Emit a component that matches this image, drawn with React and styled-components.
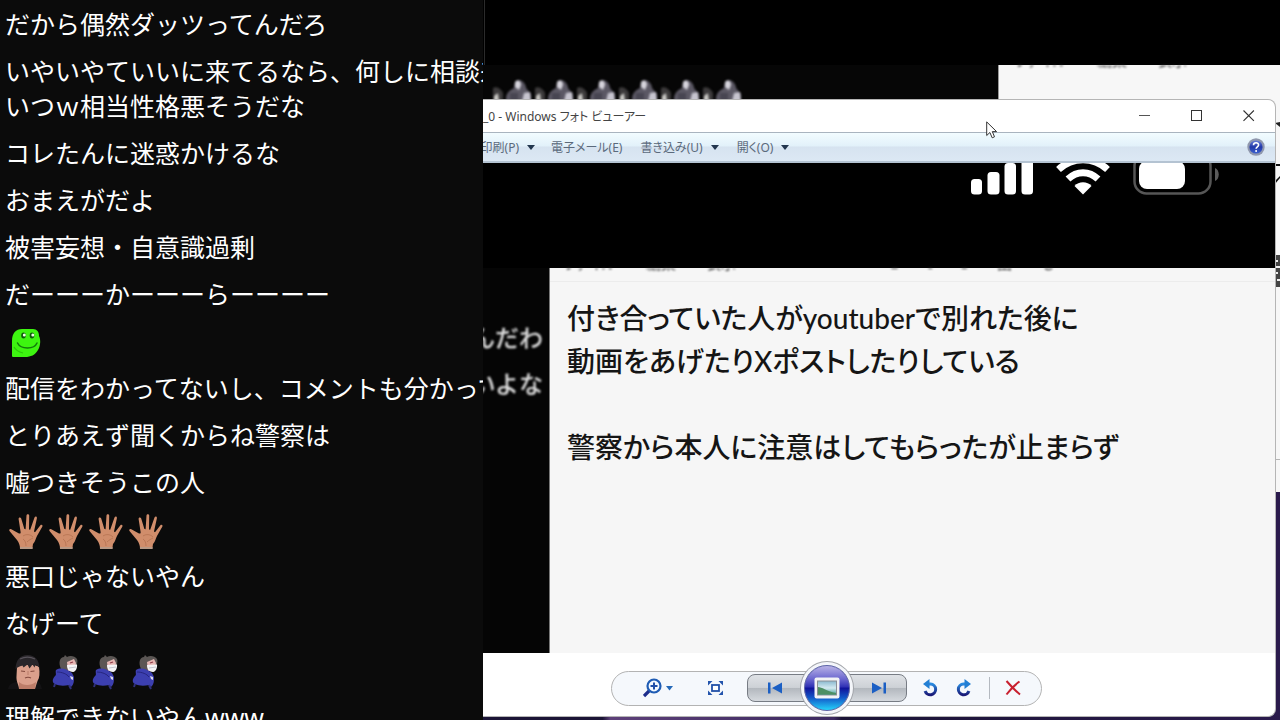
import styled, { createGlobalStyle } from "styled-components";

const GlobalStyle = createGlobalStyle`
  * {
    box-sizing: border-box;
  }

  body {
    margin: 0;
    background: #000;
    font-family: "Noto Sans", "Noto Sans CJK JP", sans-serif;
    overflow: hidden;
  }

  button {
    font-family: inherit;
  }
`;

const messages = [
  { lines: ["だから偶然ダッツってんだろ"] },
  {
    lines: [
      "いやいやていいに来てるなら、何しに相談来",
      "いつｗ相当性格悪そうだな",
    ],
  },
  { lines: ["コレたんに迷惑かけるな"] },
  { lines: ["おまえがだよ"] },
  { lines: ["被害妄想・自意識過剰"] },
  { lines: ["だーーーかーーーらーーーー"] },
  { emotes: ["frog"] },
  { lines: ["配信をわかってないし、コメントも分かって"] },
  { lines: ["とりあえず聞くからね警察は"] },
  { lines: ["嘘つきそうこの人"] },
  { emotes: ["hand", "hand", "hand", "hand"] },
  { lines: ["悪口じゃないやん"] },
  { lines: ["なげーて"] },
  { emotes: ["cap", "mask", "mask", "mask"] },
  { lines: ["理解できないやんwww"] },
];

const Frog = () => (
  <EmoteSvg viewBox="0 0 36 36" role="img" aria-label="frog">
    <path
      d="M4 31V16C4 8 8 4 14 4h11c4 0 6 3 6 7 2 4 1.500 10-1 14-3 5-7 7-13 7H6c-1.500 0-2-.4-2-1z"
      fill="#3df510"
    />
    <ellipse cx="15.500" cy="10.500" rx="2.300" ry="3" fill="#0d5a0a" />
    <ellipse cx="24" cy="10.500" rx="2.300" ry="3" fill="#0d5a0a" />
    <circle cx="16.300" cy="10" r="1.500" fill="#e8ffe0" />
    <circle cx="24.800" cy="10" r="1.500" fill="#e8ffe0" />
    <path
      d="M9.500 18c2 4 6 5 10 5s8-1.500 9.500-5"
      stroke="#127a0c"
      strokeWidth="1.500"
      fill="none"
      strokeLinecap="round"
    />
    <path d="M6 22c2 4 5 5 9 6" stroke="#2cc70a" strokeWidth="1.200" fill="none" />
  </EmoteSvg>
);

const Hand = () => (
  <EmoteSvg viewBox="0 0 36 36" role="img" aria-label="hand">
    <path
      d="M12 36c0-4-1-6-3-9L1.500 18c-.8-1.300.4-2.400 1.800-1.700L11 20.500c1.300.3 1.800-.2 1.600-1.500L10.600 6c0-1.700 2-2 2.600-.4L16.400 16l1.200.2L18.500 2.500c.2-1.700 2.500-1.700 2.700 0L21 16.400l1.200.3L26.500 4.500c.7-1.500 2.700-1 2.400.7L26 18.500l1 .7 5.400-7c1-1.200 2.700-.1 2 1.300L29 23c-1.500 3-1.500 5-4 8l-.7 5z"
      fill="#d08d6b"
    />
    <path
      d="M15 23c3-2 7-2 10 1M15 26c2 1 3 4 3 7M19 29c2-2 4-3 6-4"
      stroke="#b06e4e"
      strokeWidth=".7"
      fill="none"
    />
    <path d="M12 34h12.500v2H12z" fill="#b99a86" />
  </EmoteSvg>
);

const CapFace = () => (
  <EmoteSvg viewBox="0 0 36 36" role="img" aria-label="man in a cap">
    <path d="M0 35c1-5 5-7 10-7l19-1c3 1 4 4 5 8z" fill="#131214" />
    <path
      d="M9 13c4-3 19-3 22 0 1 6 .5 11-1.500 14-1 3-2 6-2.500 8H11c0-4-3-7-2.500-13z"
      fill="#dba08c"
    />
    <path
      d="M7.500 15C8 6 12 1 19.500 1S31 6 31.500 14c-1.500-2-3-3-4-3.500l-1 3-2-3-3 4-2-4-4 3-1-2c-2 .5-5 1.500-7 3.500z"
      fill="#29262a"
    />
    <path d="M12 5c5-2.500 10-2.500 15 0" stroke="#57525a" strokeWidth="1.200" fill="none" />
    <path
      d="M13 17l4 .5M22.500 17.500l4-.5M17 24c2-1 4-1 6 0"
      stroke="#84493e"
      strokeWidth="1.200"
      fill="none"
    />
    <path d="M20 17v4" stroke="#c08270" strokeWidth="1.200" />
    <path d="M11 28c4 4 12 4 17 0l-1 7H11z" fill="#bd7d69" />
  </EmoteSvg>
);

const MaskBoy = () => (
  <EmoteSvg viewBox="0 0 36 36" role="img" aria-label="boy with a mask">
    <path
      d="M13 15c-3-7-1-12 3-12l1-2 2 2c3-2 8-1 10 2 1 2 0 6-1 8l-9 4z"
      fill="#5b5654"
    />
    <path d="M19 8l7-3 2 4-1 6-7 2z" fill="#e6b6b3" />
    <path d="M22 9l3-1" stroke="#8e3c4a" strokeWidth="1.200" />
    <path d="M19 11l10-.5c.5 3-1 7-4 7.500-4 0-6-3-6-7z" fill="#f4f4f6" />
    <path d="M21 14l7-1" stroke="#b9b9c4" strokeWidth=".8" />
    <path
      d="M8 16c5-3 11-1 16 3l2 4c0 5 0 7-3 10l-2-2c-5 1-10 1-14-1-3-1-3-5 0-8 2-1 0-4 1-6z"
      fill="#3c3fb0"
    />
    <path d="M9 18c5 0 10 2 12 5" stroke="#26267e" strokeWidth="1" fill="none" />
    <path d="M22 22l3 1v3l-2-1z" fill="#d9d9ee" />
    <path d="M7 30l-1 3M21 31l2 4" stroke="#30307c" strokeWidth="2" />
  </EmoteSvg>
);

const emoteMap = { frog: Frog, hand: Hand, cap: CapFace, mask: MaskBoy };

const ChatMessage = ({ lines, emotes }) => (
  <MessageItem>
    {lines && lines.map((line) => <MessageLine key={line}>{line}</MessageLine>)}
    {emotes && (
      <EmoteRow>
        {emotes.map((name, index) => {
          const Emote = emoteMap[name];
          return <Emote key={index} />;
        })}
      </EmoteRow>
    )}
  </MessageItem>
);

const Signal = () => (
  <StatusSvg width="62" height="32" viewBox="0 0 62 32" aria-hidden="true">
    <rect x="0" y="16" width="11" height="15.500" rx="3.500" fill="#fff" />
    <rect x="16.500" y="9" width="12" height="22.500" rx="3.500" fill="#fff" />
    <rect x="33.500" y="0" width="11.500" height="31.500" rx="3.500" fill="#fff" />
    <rect x="50.500" y="-8" width="11.500" height="39.500" rx="3.500" fill="#fff" />
  </StatusSvg>
);

const Wifi = () => (
  <StatusSvg width="54" height="32" viewBox="0 0 54 32" aria-hidden="true">
    <path d="M27 31.500l-8.500-8.500c4-5 13-5 17 0z" fill="#fff" />
    <path d="M12 16c9-8.500 21-8.500 30 0" stroke="#fff" strokeWidth="7" fill="none" />
    <path d="M2.500 6.500c14-13 35-13 49 0" stroke="#fff" strokeWidth="7" fill="none" />
  </StatusSvg>
);

const Battery = () => (
  <StatusSvg width="86" height="33" viewBox="0 0 86 33" aria-hidden="true">
    <rect x="1.500" y="-9" width="76" height="39.500" rx="12" fill="none" stroke="#565656" strokeWidth="2.500" />
    <rect x="6" y="-2" width="46" height="28" rx="8" fill="#fff" />
    <path d="M82 5c5 2 5 11 0 13z" fill="#5c5c5c" />
  </StatusSvg>
);

const Penguins = () => (
  <PenguinSvg width="252" height="22" viewBox="0 0 252 22" aria-hidden="true">
    {[0, 1, 2, 3, 4, 5].map((n) => (
      <g key={n} transform={`translate(${n * 42} 0)`}>
        <path d="M0 9c4-2 8 1 10 5v8H0z" fill="#3c3a3b" />
        <path d="M1 17l4-3 1 8H1z" fill="#c9c8c4" />
        <path d="M13 20c0-6 4-9 8-11 0-5 2-8 5-8s7 4 7 8l5 6v7H13z" fill="#5b5864" />
        <path d="M22 3c3-3 6-1 6 3l-2 5-4-3z" fill="#d6d4dc" />
        <path d="M31 14l6-1 1 9h-9z" fill="#c7c5cf" />
        <path d="M17 14h8v8h-8z" fill="#474551" />
      </g>
    ))}
  </PenguinSvg>
);

const PhotoMenuStrip = ({ extra }) => (
  <MenuStrip $gap={extra ? 30 : 30} $pad={extra ? 14 : 16}>
    <span>ファイル</span>
    <span>編集</span>
    <span>表示</span>
    {extra && (
      <StripTools>
        <span>B</span>
        <span>I</span>
        <span>S</span>
        <span>田</span>
        <span>も</span>
      </StripTools>
    )}
  </MenuStrip>
);

const App = () => {
  return (
    <Screen>
      <GlobalStyle />
      <Chat>
        {messages.map((message, index) => (
          <ChatMessage key={index} {...message} />
        ))}
      </Chat>

      <Desktop>
        <Letterbox />
        <BackRow>
          <BackDark>
            <Penguins />
          </BackDark>
          <BackNote>
            <PhotoMenuStrip />
            <EdgeSvg width="5" height="350" viewBox="0 0 5 350" aria-hidden="true">
              <path d="M0 8l5-1v5z" fill="#222" />
              <path d="M0 49h5v2H0z" fill="#111" />
              <path d="M0 66l5-5v2L0 69z" fill="#111" />
              <path d="M0 140h5v32H0z" fill="#444" />
              <path d="M1 146h2M1 152h4M0 158h3M2 165h3" stroke="#eee" strokeWidth="2" />
              <path d="M0 344h5v1H0z" fill="#b5b5b5" />
            </EdgeSvg>
          </BackNote>
        </BackRow>
        <Wallpaper />

        <Window>
          <TitleBar>
            <Title>_0 - Windows フォト ビューアー</Title>
            <CaptionButtons>
              <CaptionButton aria-label="最小化">
                <svg width="12" height="12" viewBox="0 0 12 12">
                  <path d="M0 5.500h11" stroke="#555" />
                </svg>
              </CaptionButton>
              <CaptionButton aria-label="最大化">
                <svg width="12" height="12" viewBox="0 0 12 12">
                  <rect x=".5" y=".5" width="10" height="10" fill="none" stroke="#333" />
                </svg>
              </CaptionButton>
              <CaptionButton aria-label="閉じる">
                <svg width="12" height="12" viewBox="0 0 12 12">
                  <path d="M.5.500l10.400 10.400M10.900.500L.5 10.900" stroke="#333" strokeWidth="1.100" />
                </svg>
              </CaptionButton>
            </CaptionButtons>
          </TitleBar>

          <MenuBar>
            <PrintButton>
              印刷(P)
              <Caret />
            </PrintButton>
            <MenuButton>電子メール(E)</MenuButton>
            <MenuButton>
              書き込み(U)
              <Caret />
            </MenuButton>
            <MenuButton>
              開く(O)
              <Caret />
            </MenuButton>
            <HelpButton aria-label="ヘルプ">
              <svg width="18" height="18" viewBox="0 0 18 18">
                <defs>
                  <linearGradient id="help" x1="0" y1="0" x2="0" y2="1">
                    <stop offset="0" stopColor="#6a7fd8" />
                    <stop offset=".5" stopColor="#2238a8" />
                    <stop offset="1" stopColor="#3d63cf" />
                  </linearGradient>
                </defs>
                <circle cx="9" cy="9" r="8.700" fill="#8f97ad" />
                <circle cx="9" cy="9" r="6.600" fill="url(#help)" />
                <path
                  d="M6.500 7.200C6.500 4 11.700 4 11.600 7c0 1.900-2.500 1.900-2.500 3.800"
                  stroke="#fff"
                  strokeWidth="1.600"
                  fill="none"
                />
                <circle cx="9.100" cy="12.900" r="1" fill="#fff" />
              </svg>
            </HelpButton>
          </MenuBar>

          <Photo>
            <PhoneStatus>
              <Signal />
              <Wifi />
              <Battery />
            </PhoneStatus>
            <PhotoBody>
              <PhotoChat>
                <PhotoChatLine>んだわ</PhotoChatLine>
                <PhotoChatLine>いよな</PhotoChatLine>
              </PhotoChat>
              <Memo>
                <PhotoMenuStrip extra />
                <MemoText>
                  付き合っていた人がyoutuberで別れた後に
                  <br />
                  動画をあげたりXポストしたりしている
                  <br />
                  <br />
                  警察から本人に注意はしてもらったが止まらず
                </MemoText>
              </Memo>
            </PhotoBody>
          </Photo>

          <Footer>
            <ControlPill>
              <IconButton aria-label="表示サイズの変更">
                <svg width="31" height="20" viewBox="0 0 31 20">
                  <path d="M6.500 12.500L1 18" stroke="#1d2d8c" strokeWidth="3.200" />
                  <circle cx="11" cy="8" r="6.500" fill="#f4faff" stroke="#1f5cb4" strokeWidth="2.200" />
                  <path d="M11 4.500v7M7.500 8h7" stroke="#1f4fa8" strokeWidth="2" />
                  <path d="M23 8h7l-3.500 4.500z" fill="#2468b8" />
                </svg>
              </IconButton>
              <IconButton aria-label="実際のサイズ" $before={33}>
                <svg width="17" height="16" viewBox="0 0 17 16">
                  <rect x="5" y="5" width="7" height="6" fill="#fff" stroke="#2250a8" strokeWidth="1.800" />
                  <path d="M1 1h4.500L1 5.500zM16 1v4.500L11.500 1zM1 15v-4.500L5.500 15zM16 15h-4.500l4.500-4.500z" fill="#2454ac" />
                </svg>
              </IconButton>
              <NavGroup>
                <PrevButton aria-label="前へ">
                  <svg width="16" height="12" viewBox="0 0 16 12">
                    <path d="M1 .5h2.500v11H1zM15 .5v11L5 6z" fill="#1b5fc4" />
                  </svg>
                </PrevButton>
                <NextButton aria-label="次へ">
                  <svg width="16" height="12" viewBox="0 0 16 12">
                    <path d="M15 .5h-2.500v11H15zM1 .5v11L11 6z" fill="#1b5fc4" />
                  </svg>
                </NextButton>
                <SlideButton aria-label="スライド ショーの再生">
                  <svg width="26" height="22" viewBox="0 0 26 22">
                    <defs>
                      <linearGradient id="scene" x1="0" y1="0" x2="0" y2="1">
                        <stop offset="0" stopColor="#8ab9cf" />
                        <stop offset=".5" stopColor="#d4eaf0" />
                        <stop offset="1" stopColor="#3e9a92" />
                      </linearGradient>
                    </defs>
                    <rect x=".5" y=".5" width="25" height="21" rx="2" fill="#f2f3f5" />
                    <rect x="3.500" y="4" width="19" height="14" fill="url(#scene)" stroke="#8c8f96" />
                    <path d="M4 10c4 0 8 4 18 6v1.500H4z" fill="#4d8f63" />
                  </svg>
                </SlideButton>
              </NavGroup>
              <IconButton aria-label="左に回転" $before={15}>
                <svg width="16" height="18" viewBox="0 0 16 18">
                  <defs>
                    <linearGradient id="ink" x1="0" y1="0" x2="0" y2="1">
                      <stop offset="0" stopColor="#2a8be0" />
                      <stop offset="1" stopColor="#1a1a78" />
                    </linearGradient>
                  </defs>
                  <path d="M6 5h2.500a5.400 5.400 0 1 1-5.400 7" stroke="url(#ink)" strokeWidth="3" fill="none" />
                  <path d="M7.500 0v10L1 5z" fill="#237fd4" />
                </svg>
              </IconButton>
              <IconButton aria-label="右に回転" $before={18}>
                <svg width="16" height="18" viewBox="0 0 16 18">
                  <path d="M10 5H7.500a5.400 5.400 0 1 0 5.400 7" stroke="url(#ink)" strokeWidth="3" fill="none" />
                  <path d="M8.500 0v10L15 5z" fill="#237fd4" />
                </svg>
              </IconButton>
              <Divider />
              <IconButton aria-label="削除">
                <svg width="16" height="16" viewBox="0 0 16 16">
                  <path
                    d="M1.500 1c4 4.500 8 9 13.500 13.500M14.500 1.500C9.500 5 5 10 1.500 14.500"
                    stroke="#c8202f"
                    strokeWidth="2"
                    fill="none"
                  />
                </svg>
              </IconButton>
            </ControlPill>
          </Footer>
        </Window>

        <Cursor width="12" height="18" viewBox="0 0 12 18" aria-hidden="true">
          <path
            d="M.7.900v13.600l3.200-3 2.300 5.300 2.300-1-2.200-5.200h4.300z"
            fill="#fff"
            stroke="#333"
          />
        </Cursor>
      </Desktop>
    </Screen>
  );
};

export default App;

const Screen = styled.div`
  display: grid;
  grid-template-columns: minmax(0, 483fr) minmax(0, 797fr);
  height: 100vh;
  overflow: hidden;
`;

const Chat = styled.ul`
  display: flex;
  flex-direction: column;
  gap: 12px;
  margin: 0;
  padding: 7px 0 0 5px;
  list-style: none;
  background: #0b0b0b;
  color: #fff;
  overflow: hidden;
`;

const MessageItem = styled.li`
  flex: none;
`;

const MessageLine = styled.div`
  font-size: 25px;
  line-height: 35px;
  white-space: nowrap;
`;

const EmoteRow = styled.div`
  display: flex;
  gap: 4px;
  height: 35px;
  padding: 1px 0 0 3px;
`;

const EmoteSvg = styled.svg`
  width: 36px;
  height: 36px;
  flex: none;
`;

const Desktop = styled.main`
  position: relative;
  display: flex;
  flex-direction: column;
  background: #000;
  overflow: hidden;
`;

const Letterbox = styled.div`
  height: 65px;
  flex: none;
  margin-left: 1px;
  border-left: 1px solid #2b2b2b;
`;

const BackRow = styled.div`
  display: grid;
  grid-template-columns: 515fr 282fr;
  height: 427px;
  flex: none;
`;

const BackDark = styled.div`
  padding: 14px 0 0 10px;
  background: #060606;
`;

const PenguinSvg = styled.svg`
  display: block;
  filter: blur(1px);
`;

const BackNote = styled.div`
  background: #f7f7f7;
  border-left: 1px solid #999;
`;

const EdgeSvg = styled.svg`
  display: block;
  margin: 46px 0 0 auto;
`;

const MenuStrip = styled.div`
  display: flex;
  align-items: flex-end;
  gap: ${(props) => props.$gap}px;
  height: 4px;
  padding-left: ${(props) => props.$pad}px;
  overflow: hidden;
  color: #333;
  font-size: 15px;
  line-height: 18px;
  font-feature-settings: "palt";
  white-space: nowrap;
  filter: blur(1px);

  span {
    flex: none;
  }
`;

const StripTools = styled.div`
  display: flex;
  gap: 28px;
  margin-left: 124px;
`;

const Wallpaper = styled.div`
  flex: 1;
  background: linear-gradient(90deg, #1b1436 15%, #5d4079 16%, #3d2a60 44%, #1b1436 45%, #2a1a4c);
`;

const Window = styled.section`
  position: absolute;
  top: 99px;
  right: 4px;
  bottom: 3px;
  left: 0;
  display: flex;
  flex-direction: column;
  background: #fff;
  border: 1px solid #b5b5b5;
  border-left: 0;
  border-radius: 0 8px 8px 0;
  overflow: hidden;
`;

const TitleBar = styled.header`
  display: flex;
  align-items: center;
  height: 32px;
  flex: none;
`;

const Title = styled.h1`
  margin: 0;
  flex: 1;
  color: #444;
  font-size: 12px;
  font-weight: 400;
  font-feature-settings: "palt";
`;

const CaptionButtons = styled.div`
  display: flex;
`;

const CaptionButton = styled.button`
  display: flex;
  align-items: center;
  justify-content: center;
  width: 52px;
  height: 32px;
  padding: 0;
  border: 0;
  background: none;
`;

const MenuBar = styled.nav`
  display: flex;
  align-items: center;
  height: 31px;
  flex: none;
  padding-right: 10px;
  border-top: 1px solid #a9b4bf;
  border-bottom: 2px solid #b4c3d2;
  background: linear-gradient(#f2fcff, #e2f1fa 46%, #d6e3f0 50%, #dce8f4);
`;

const MenuButton = styled.button`
  display: flex;
  align-items: center;
  gap: 8px;
  margin-right: 18px;
  padding: 1px 0 0;
  border: 0;
  background: none;
  color: #5b6a7c;
  font-size: 12px;
  line-height: 20px;
  font-feature-settings: "palt";
  white-space: nowrap;
`;

/* the first entry runs out of view on the left */
const PrintButton = styled(MenuButton)`
  width: 52px;
  margin-right: 16px;
  justify-content: flex-end;
`;

const Caret = styled.span`
  border: 4px solid transparent;
  border-top: 5px solid #22364e;
  border-bottom: 0;
`;

const HelpButton = styled.button`
  display: flex;
  margin-left: auto;
  padding: 0;
  border: 0;
  background: none;
`;

const Photo = styled.div`
  display: flex;
  flex-direction: column;
  flex: 1;
  min-height: 0;
`;

const PhoneStatus = styled.div`
  display: flex;
  justify-content: flex-end;
  gap: 23px;
  height: 105px;
  flex: none;
  padding-right: 56px;
  background: #000;
`;

const StatusSvg = styled.svg`
  display: block;
  flex: none;
`;

const PhotoBody = styled.div`
  display: flex;
  flex: 1;
`;

const PhotoChat = styled.div`
  display: flex;
  flex-direction: column;
  gap: 11px;
  width: 67px;
  flex: none;
  padding: 52px 6px 0 0;
  background: #050505;
  border-right: 1px solid #777;
`;

const PhotoChatLine = styled.div`
  display: flex;
  justify-content: flex-end;
  color: #e2e2e2;
  font-size: 24px;
  font-weight: 500;
  line-height: 35px;
  white-space: nowrap;
  filter: blur(1px);
`;

const Memo = styled.article`
  flex: 1;
  background: #f6f6f6;
`;

const MemoText = styled.p`
  margin: 9px 0 0;
  padding: 15px 0 0 17px;
  border-top: 1px solid #ececec;
  color: #151515;
  font-family: Lato, "Noto Sans CJK JP", sans-serif;
  font-size: 28px;
  font-weight: 500;
  line-height: 43px;
  font-feature-settings: "palt";
  white-space: nowrap;
`;

const Footer = styled.footer`
  display: flex;
  align-items: center;
  justify-content: center;
  height: 63px;
  flex: none;
  padding: 7px 106px 0 0;
`;

const ControlPill = styled.div`
  display: flex;
  align-items: center;
  height: 35px;
  padding: 0 20px 0 31px;
  border: 1px solid #b3b3b3;
  border-radius: 18px;
  background: #f5f8fc;
`;

const IconButton = styled.button`
  display: flex;
  margin-left: ${(props) => props.$before || 0}px;
  padding: 0;
  border: 0;
  background: none;
`;

const NavGroup = styled.div`
  position: relative;
  display: flex;
  width: 160px;
  height: 28px;
  margin-left: 23px;
`;

const NavButton = styled.button`
  display: flex;
  align-items: center;
  flex: 1;
  border: 1px solid #777c84;
  background: linear-gradient(#dfe2e6, #cdd1d6 48%, #b2b7bd 50%, #d5d9de);
`;

const PrevButton = styled(NavButton)`
  padding: 0 0 0 19px;
  border-radius: 8px 0 0 8px;
`;

const NextButton = styled(NavButton)`
  justify-content: flex-end;
  padding: 0 19px 0 0;
  border-radius: 0 8px 8px 0;
`;

const SlideButton = styled.button`
  position: absolute;
  top: 50%;
  left: 50%;
  display: flex;
  align-items: center;
  justify-content: center;
  width: 46px;
  height: 46px;
  padding: 0;
  transform: translate(-50%, -50%);
  border: 1px solid #5a62a8;
  border-radius: 50%;
  background: linear-gradient(#b9b3e6, #6a66cf 30%, #2d2fb4 48%, #10129a 50%, #1257c8 72%, #25d3fa);
  box-shadow: 0 0 0 3px #f4f6fa, 0 0 0 4px #a2a5aa;
`;

const Divider = styled.span`
  width: 1px;
  height: 22px;
  margin: 0 15px 0 17px;
  background: #b4b9c0;
`;

const Cursor = styled.svg`
  position: absolute;
  top: 121px;
  left: 503px;
`;
